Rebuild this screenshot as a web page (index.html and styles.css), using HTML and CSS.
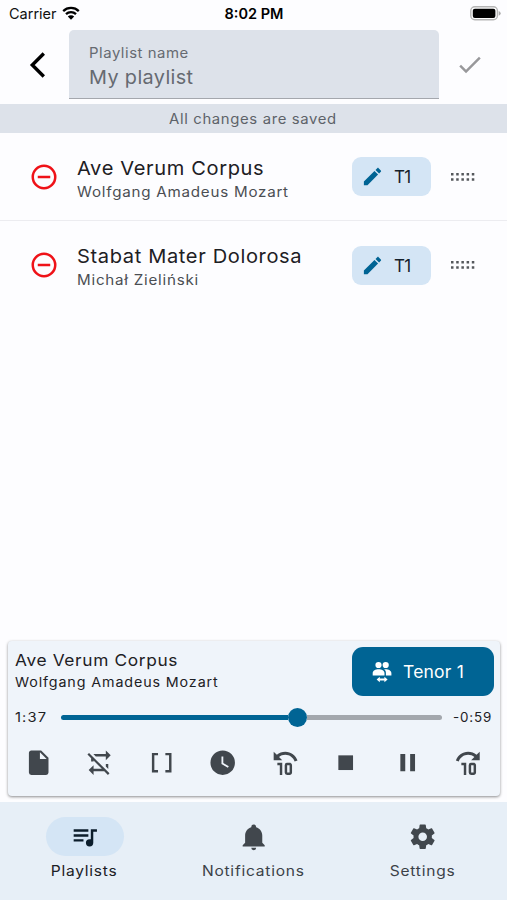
FILE: index.html
```html
<!DOCTYPE html>
<html lang="en">
<head>
<meta charset="utf-8">
<title>My playlist</title>
<link rel="stylesheet" href="styles.css">
</head>
<body>
<svg class="defs" aria-hidden="true">
  <symbol id="minus" viewBox="0 0 24 24"><path d="M12,20C7.59,20 4,16.41 4,12C4,7.59 7.59,4 12,4C16.41,4 20,7.59 20,12C20,16.41 16.41,20 12,20M12,2A10,10 0 0,0 2,12A10,10 0 0,0 12,22A10,10 0 0,0 22,12A10,10 0 0,0 12,2M7,13H17V11H7"/></symbol>
  <symbol id="pencil" viewBox="0 0 24 24"><path d="M20.71,7.04C21.1,6.65 21.1,6 20.71,5.63L18.37,3.29C18,2.9 17.35,2.9 16.96,3.29L15.12,5.12L18.87,8.87M3,17.25V21H6.75L17.81,9.93L14.06,6.18L3,17.25Z"/></symbol>
  <symbol id="drag" viewBox="0 0 24 8"><path d="M0 0h2.5v2.5H0zM5.2 0h2.5v2.5H5.2zM10.4 0h2.5v2.5h-2.5zM15.6 0h2.5v2.5h-2.5zM20.8 0h2.5v2.5h-2.5zM0 5.2h2.5v2.5H0zM5.2 5.2h2.5v2.5H5.2zM10.4 5.2h2.5v2.5h-2.5zM15.6 5.2h2.5v2.5h-2.5zM20.8 5.2h2.5v2.5h-2.5z"/></symbol>
</svg>
<div class="status">
  <div class="carrier"><span class="carrier-name">Carrier</span>
    <svg class="wifi" viewBox="0 0 18 14"><path d="M1.2 5.1A11.2 11.2 0 0 1 16.8 5.1M4 8.2A7.2 7.2 0 0 1 14 8.2" fill="none" stroke="#000" stroke-width="2.3"/><path d="M9 13.8L5.8 10.6A4.6 4.6 0 0 1 12.2 10.6Z"/></svg>
  </div>
  <div class="clock">8:02 PM</div>
  <div class="power"><svg class="battery" viewBox="0 0 31 15"><rect x=".8" y=".8" width="26.6" height="13" rx="4" fill="#fff" stroke="#b5b5b5" stroke-width="1.4"/><rect x="2.8" y="2.7" width="22.6" height="9.2" rx="2"/><path d="M28.7 5Q30.7 6 30.7 7.4T28.7 9.8Z" fill="#aaa"/></svg></div>
</div>
<header class="header">
  <svg class="back" viewBox="0 0 18 28"><path d="M14.8 2.5L3.3 14L14.8 25.5" fill="none" stroke="#000" stroke-width="3.4"/></svg>
  <div class="field"><label class="field-label">Playlist name</label><div class="field-value">My playlist</div></div>
  <svg class="check" viewBox="0 0 24 24"><path d="M21,7L9,19L3.5,13.5L4.91,12.09L9,16.17L19.59,5.59L21,7Z"/></svg>
</header>
<div class="banner"><span>All changes are saved</span></div>
<main class="list">
  <div class="row">
    <svg class="remove"><use href="#minus"/></svg>
    <div class="song"><div class="title">Ave Verum Corpus</div><div class="composer">Wolfgang Amadeus Mozart</div></div>
    <button class="chip"><svg class="pencil"><use href="#pencil"/></svg><span>T1</span></button>
    <svg class="drag"><use href="#drag"/></svg>
  </div>
  <div class="row">
    <svg class="remove"><use href="#minus"/></svg>
    <div class="song"><div class="title">Stabat Mater Dolorosa</div><div class="composer">Michał Zieliński</div></div>
    <button class="chip"><svg class="pencil"><use href="#pencil"/></svg><span>T1</span></button>
    <svg class="drag"><use href="#drag"/></svg>
  </div>
</main>
<section class="player">
  <div class="player-top">
    <div class="now"><div class="now-title">Ave Verum Corpus</div><div class="now-composer">Wolfgang Amadeus Mozart</div></div>
    <button class="voice">
      <svg class="people" viewBox="0 0 20 22"><circle cx="6.5" cy="4" r="3.1"/><circle cx="13.7" cy="4" r="3.1"/><path d="M.7 14.4V12.2C.7 9.5 3.5 8.2 6.6 8.2S12.5 9.5 12.5 12.2V14.4ZM13.9 14.4V12C13.9 10.4 13.3 9.2 12.1 8.3C16.2 7.9 19.4 9.5 19.4 12.2V14.4ZM7.8 15.7V17.5H12.4V15.7L15.6 18.6L12.4 21.3V19.6H7.8V21.3L4.6 18.6Z"/></svg>
      <span>Tenor 1</span>
    </button>
  </div>
  <div class="progress">
    <div class="elapsed"><span class="time">1:37</span></div>
    <div class="track"><div class="played"></div><div class="thumb"></div><div class="rest"></div></div>
    <span class="time remaining">-0:59</span>
  </div>
  <div class="controls">
    <svg viewBox="0 0 24 24"><path d="M13,9V3.5L18.5,9M6,2C4.89,2 4,2.89 4,4V20A2,2 0 0,0 6,22H18A2,2 0 0,0 20,20V8L14,2H6Z"/></svg>
    <svg viewBox="0 0 24 24"><path d="M2,5.27L3.28,4L20,20.72L18.73,22L15.73,19H7V22L3,18L7,14V17H13.73L7,10.27V11H5V8.27L2,5.27M17,13H19V17.18L17,15.18V13M17,5V2L21,6L17,10V7H8.82L6.82,5H17Z"/></svg>
    <svg viewBox="0 0 24 24"><path d="M15,4V6H18V18H15V20H20V4M4,4V20H9V18H6V6H9V4H4Z"/></svg>
    <svg viewBox="0 0 24 24"><path d="M12,2A10,10 0 0,0 2,12A10,10 0 0,0 12,22A10,10 0 0,0 22,12A10,10 0 0,0 12,2M16.2,16.2L11,13V7H12.5V12.2L17,14.9L16.2,16.2Z"/></svg>
    <svg viewBox="0 0 24 24"><path d="M12.5,3C17.15,3 21.08,6.03 22.47,10.22L20.1,11C19.05,7.81 16.04,5.5 12.5,5.5C10.54,5.5 8.77,6.22 7.38,7.38L10,10H3V3L5.6,5.6C7.45,4 9.85,3 12.5,3M10,12V22H8V14H6V12H10M18,14V20C18,21.11 17.11,22 16,22H14A2,2 0 0,1 12,20V14A2,2 0 0,1 14,12H16C17.11,12 18,12.9 18,14M14,14V20H16V14H14Z"/></svg>
    <svg viewBox="0 0 24 24"><path d="M18,18H6V6H18V18Z"/></svg>
    <svg viewBox="0 0 24 24"><path d="M14,19H18V5H14M6,19H10V5H6V19Z"/></svg>
    <svg viewBox="0 0 24 24"><path d="M10,12V22H8V14H6V12H10M18,14V20C18,21.11 17.11,22 16,22H14A2,2 0 0,1 12,20V14A2,2 0 0,1 14,12H16C17.11,12 18,12.9 18,14M14,14V20H16V14H14M11.5,3C14.15,3 16.55,4 18.4,5.6L21,3V10H14L16.62,7.38C15.23,6.22 13.46,5.5 11.5,5.5C7.96,5.5 4.95,7.81 3.9,11L1.53,10.22C2.92,6.03 6.85,3 11.5,3Z"/></svg>
  </div>
</section>
<nav class="nav">
  <a class="tab active"><span class="pill"><svg viewBox="0 0 24 24"><path d="M15,6H3V8H15V6M15,10H3V12H15V10M3,16H11V14H3V16M17,6V14.18C16.69,14.07 16.35,14 16,14A3,3 0 0,0 13,17A3,3 0 0,0 16,20A3,3 0 0,0 19,17V8H22V6H17Z"/></svg></span><span class="tab-label">Playlists</span></a>
  <a class="tab"><span class="pill"><svg viewBox="0 0 24 24"><path d="M21,19V20H3V19L5,17V11C5,7.9 7.03,5.17 10,4.29C10,4.19 10,4.1 10,4A2,2 0 0,1 12,2A2,2 0 0,1 14,4C14,4.1 14,4.19 14,4.29C16.97,5.17 19,7.9 19,11V17L21,19M14,21A2,2 0 0,1 12,23A2,2 0 0,1 10,21"/></svg></span><span class="tab-label">Notifications</span></a>
  <a class="tab"><span class="pill"><svg viewBox="0 0 24 24"><path d="M12,15.5A3.5,3.5 0 0,1 8.5,12A3.5,3.5 0 0,1 12,8.5A3.5,3.5 0 0,1 15.5,12A3.5,3.5 0 0,1 12,15.5M19.43,12.97C19.47,12.65 19.5,12.33 19.5,12C19.5,11.67 19.47,11.34 19.43,11L21.54,9.37C21.73,9.22 21.78,8.95 21.66,8.73L19.66,5.27C19.54,5.05 19.27,4.96 19.05,5.05L16.56,6.05C16.04,5.66 15.5,5.32 14.87,5.07L14.5,2.42C14.46,2.18 14.25,2 14,2H10C9.75,2 9.54,2.18 9.5,2.42L9.13,5.07C8.5,5.32 7.96,5.66 7.44,6.05L4.95,5.05C4.73,4.96 4.46,5.05 4.34,5.27L2.34,8.73C2.21,8.95 2.27,9.22 2.46,9.37L4.57,11C4.53,11.34 4.5,11.67 4.5,12C4.5,12.33 4.53,12.65 4.57,12.97L2.46,14.63C2.27,14.78 2.21,15.05 2.34,15.27L4.34,18.73C4.46,18.95 4.73,19.03 4.95,18.95L7.44,17.94C7.96,18.34 8.5,18.68 9.13,18.93L9.5,21.58C9.54,21.82 9.75,22 10,22H14C14.25,22 14.46,21.82 14.5,21.58L14.87,18.93C15.5,18.67 16.04,18.34 16.56,17.94L19.05,18.95C19.27,19.03 19.54,18.95 19.66,18.73L21.66,15.27C21.78,15.05 21.73,14.78 21.54,14.63L19.43,12.97Z"/></svg></span><span class="tab-label">Settings</span></a>
</nav>
</body>
</html>
```
FILE: styles.css
```css
* { box-sizing: border-box; }
body {
  margin: 0;
  height: 900px;
  display: flex;
  flex-direction: column;
  background: #fdfdff;
  color: #1d2024;
  font-family: Inter, sans-serif;
  overflow: hidden;
}
svg { display: block; flex: none; }
button { border: 0; padding: 0; font: inherit; }
.defs { position: absolute; width: 0; height: 0; }

.status {
  height: 30px;
  display: grid;
  grid-template-columns: 1fr auto 1fr;
  align-items: center;
  padding: 0 6px 3px 9px;
  color: #111;
}
.carrier { display: flex; align-items: center; gap: 6px; }
.carrier-name { font-size: 14.5px; line-height: 18px; width: 47px; letter-spacing: 0; }
.wifi { width: 18px; height: 14px; margin-top: -2px; }
.clock { font-size: 14.5px; font-weight: 600; color: #000; margin-right: 2px; }
.power { display: flex; justify-content: flex-end; }
.battery { width: 31px; height: 15px; }

.header { height: 74px; display: flex; align-items: flex-start; }
.back { width: 18px; height: 28px; margin: 21px 22px 0 29px; }
.field {
  width: 370px;
  height: 69px;
  padding: 14px 20px 0;
  background: #dde2ea;
  border-bottom: 1.5px solid #a4a7ad;
  border-radius: 5px 5px 0 0;
  color: #666a71;
}
.field-label { display: block; font-size: 14px; line-height: 18px; letter-spacing: .5px; transform: scaleX(1.065); transform-origin: left; }
.field-value { font-size: 19px; line-height: 24px; margin-top: 4px; letter-spacing: .35px; transform: scaleX(1.045); transform-origin: left; }
.check { width: 29.4px; height: 29.4px; margin: 20px 0 0 16px; fill: #98989b; }

.banner {
  height: 29px;
  display: flex;
  align-items: center;
  justify-content: center;
  padding-right: 1px;
  background: #dde2ea;
  color: #5d6269;
  font-size: 14px;
  letter-spacing: .6px;
}
.banner span { transform: scaleX(1.063); }

.list { flex: 1; }
.row { height: 88px; display: flex; align-items: center; padding-left: 29px; border-bottom: 1.5px solid #ececf0; }
.row:last-child { border: 0; height: 88px; }
.remove { width: 30px; height: 30px; fill: #ef1218; }
.song { width: 275.5px; margin-left: 17.5px; padding-top: 4px; white-space: nowrap; }
.title { font-size: 19px; line-height: 24px; letter-spacing: .6px; transform: scaleX(1.056); transform-origin: left; }
.composer { font-size: 14px; line-height: 18px; margin-top: 2px; letter-spacing: .7px; color: #4b4e53; transform: scaleX(1.083); transform-origin: left; }
.chip {
  width: 79px;
  height: 39px;
  display: flex;
  align-items: center;
  gap: 10px;
  padding-left: 9px;
  background: #d4e5f5;
  border-radius: 9px;
  color: #14202b;
  font-size: 17px;
}
.chip span { letter-spacing: -.6px; margin-top: 1px; }
.pencil { width: 23px; height: 23px; fill: #006494; }
.drag { width: 24px; height: 8px; margin-left: 19.5px; fill: #55585c; }

.player {
  height: 155px;
  margin: 0 7px 6px 8px;
  background: #eff4fa;
  border-radius: 4px;
  box-shadow: 0 1px 3px rgba(0, 0, 0, .45);
}
.player-top { display: flex; justify-content: space-between; padding: 6px 6.5px 0 7px; }
.now { padding-top: 3px; white-space: nowrap; }
.now-title { font-size: 16.5px; line-height: 20px; letter-spacing: .6px; transform: scaleX(1.05); transform-origin: left; }
.now-composer { font-size: 13px; line-height: 18px; margin-top: 3px; letter-spacing: .8px; transform: scaleX(1.1); transform-origin: left; }
.voice {
  width: 142px;
  height: 49px;
  display: flex;
  align-items: center;
  gap: 11px;
  padding-left: 20.5px;
  background: #006494;
  border-radius: 11px;
  color: #fff;
  font-size: 17px;
}
.voice span { letter-spacing: .2px; transform: scaleX(1.03); transform-origin: left; margin-top: 1px; }
.people { width: 20px; height: 22px; fill: #fff; }
.progress { height: 42px; display: flex; align-items: center; padding: 0 7px; }
.time { display: block; font-size: 13px; letter-spacing: 1px; white-space: nowrap; transform: scaleX(1.13); transform-origin: left; }
.remaining { letter-spacing: .8px; transform: scaleX(1.03); }
.elapsed { width: 45.5px; flex: none; }
.track { width: 381px; margin-right: 11.5px; flex: none; display: flex; align-items: center; }
.played { width: 227px; height: 5px; background: #006494; border-radius: 3px 0 0 3px; }
.thumb { width: 19px; height: 19px; border-radius: 50%; background: #006494; }
.rest { flex: 1; height: 5px; background: #a3a7ad; border-radius: 0 3px 3px 0; }
.controls { display: flex; justify-content: space-between; padding: 10px 16.5px 0 15.5px; }
.controls svg { width: 29.4px; height: 29.4px; fill: #41474d; }

.nav { height: 98px; display: grid; grid-template-columns: repeat(3, 1fr); padding-top: 15px; background: #e7eff7; }
.tab { display: flex; flex-direction: column; align-items: center; color: #3b4147; fill: #41474d; }
.pill { width: 78px; height: 39px; border-radius: 20px; display: flex; align-items: center; justify-content: center; }
.pill svg { width: 29.4px; height: 29.4px; }
.tab-label { font-size: 14px; line-height: 18px; margin-top: 6px; letter-spacing: .7px; transform: scaleX(1.11); }
.active { color: #1b2025; fill: #0b1d2b; }
.active .pill { background: #d4e5f5; }
```
